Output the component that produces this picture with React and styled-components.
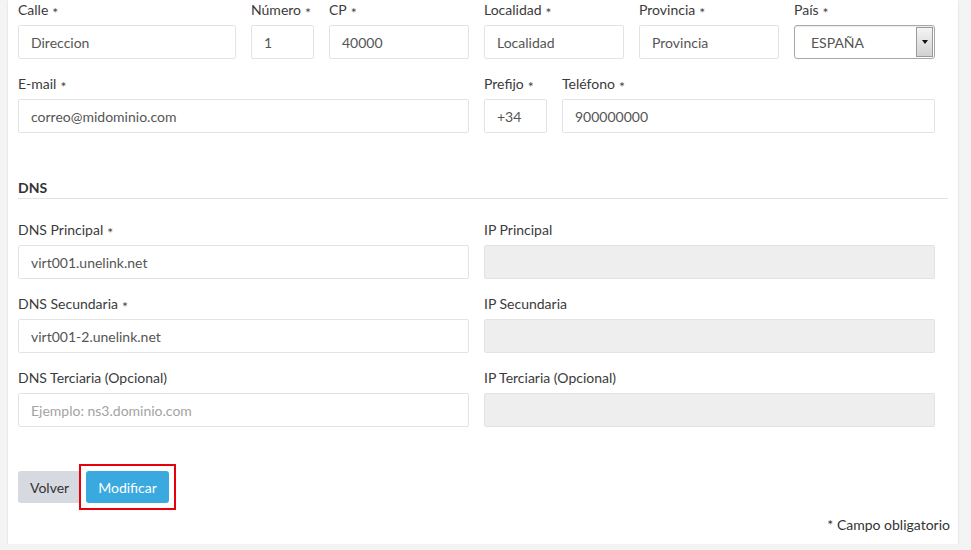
import React from "react"
import styled, { createGlobalStyle } from "styled-components"

const GlobalStyle = createGlobalStyle`
  html, body {
    margin: 0;
    padding: 0;
    background: #f4f4f4;
    font-family: Lato, "Open Sans", "Liberation Sans", sans-serif;
    font-size: 14px;
    color: #333;
  }
  * { box-sizing: border-box; }
`

const Card = styled.div`
  margin-left: 8px;
  width: 950px;
  background: #fff;
  padding: 0 10px 9px 10px;
  box-shadow: 0 1px 2px rgba(0, 0, 0, 0.12);
`

const FormGrid = styled.div`
  width: 917px;
`

const Row = styled.div`
  display: flex;
  gap: 15px;
`

const Field = styled.div`
  width: ${props => props.w}px;
  flex: none;
  margin-bottom: 15px;
`

const Label = styled.label`
  display: block;
  height: 20px;
  line-height: 20px;
  margin-bottom: 5px;
  color: #3b3b3b;
  white-space: nowrap;
`

const Req = styled.span`
  margin-left: 4px;
  font-size: 14px;
  color: #444;
  vertical-align: -3px;
`

const Input = styled.input`
  display: block;
  width: 100%;
  height: 34px;
  padding: 0 12px;
  border: 1px solid #e3e3e3;
  border-radius: 2px;
  font-family: inherit;
  font-size: 14px;
  color: #555;
  background: ${props => (props.disabled ? "#eeeeee" : "#fff")};
  outline: none;
  &::placeholder {
    color: #a3a3a3;
  }
`

const Select = styled.div`
  display: flex;
  align-items: center;
  height: 34px;
  border: 1px solid #a8a8a8;
  border-radius: 3px;
  padding-left: 16px;
  color: #555;
  box-shadow: inset 0 1px 1px rgba(0, 0, 0, 0.08);
  overflow: hidden;
`

const SelectText = styled.span`
  flex: 1;
`

const SelectArrow = styled.span`
  width: 17px;
  align-self: stretch;
  margin: 1px 1px 1px 0;
  border: 1px solid #9a9a9a;
  background: linear-gradient(#f4f4f4, #d2d2d2);
  display: flex;
  align-items: center;
  justify-content: center;
  &::after {
    content: "";
    border-left: 3.5px solid transparent;
    border-right: 3.5px solid transparent;
    border-top: 4px solid #111;
  }
`

const SectionTitle = styled.h4`
  margin: 30px 0 21px 0;
  height: 21px;
  line-height: 20px;
  font-size: 14px;
  font-weight: 700;
  color: #333;
  border-bottom: 1px solid #e3e3e3;
`

const Actions = styled.div`
  display: flex;
  gap: 5px;
  margin-top: 29px;
`

const Button = styled.button`
  height: 32px;
  padding: 0 12px;
  border: none;
  border-radius: 3px;
  font-family: inherit;
  font-size: 14px;
  background: ${props => (props.primary ? "#39a9e0" : "#d6d9e0")};
  color: ${props => (props.primary ? "#fff" : "#333")};
`

const Highlight = styled.span`
  position: relative;
  display: inline-flex;
  &::after {
    content: "";
    position: absolute;
    left: -7px;
    right: -7px;
    top: -7px;
    bottom: -7px;
    border: 2px solid #e8000b;
    pointer-events: none;
  }
`

const Note = styled.p`
  margin: 12px -2px 0 0;
  line-height: 20px;
  text-align: right;
  color: #333;
`

const F = ({ w, label, req, children }) => (
  <Field w={w}>
    <Label>
      {label}
      {req && <Req>*</Req>}
    </Label>
    {children}
  </Field>
)

export default function App() {
  return (
    <>
      <GlobalStyle />
      <Card>
        <FormGrid>
          <Row>
            <F w={218} label="Calle" req>
              <Input defaultValue="Direccion" />
            </F>
            <F w={63} label="Número" req>
              <Input defaultValue="1" />
            </F>
            <F w={140} label="CP" req>
              <Input defaultValue="40000" />
            </F>
            <F w={140} label="Localidad" req>
              <Input defaultValue="Localidad" />
            </F>
            <F w={140} label="Provincia" req>
              <Input defaultValue="Provincia" />
            </F>
            <F w={141} label="País" req>
              <Select>
                <SelectText>ESPAÑA</SelectText>
                <SelectArrow />
              </Select>
            </F>
          </Row>
          <Row>
            <F w={451} label="E-mail" req>
              <Input defaultValue="correo@midominio.com" />
            </F>
            <F w={63} label="Prefijo" req>
              <Input defaultValue="+34" />
            </F>
            <F w={373} label="Teléfono" req>
              <Input defaultValue="900000000" />
            </F>
          </Row>
        </FormGrid>

        <SectionTitle>DNS</SectionTitle>

        <FormGrid>
          <Row>
            <F w={451} label="DNS Principal" req>
              <Input defaultValue="virt001.unelink.net" />
            </F>
            <F w={451} label="IP Principal">
              <Input disabled />
            </F>
          </Row>
          <Row>
            <F w={451} label="DNS Secundaria" req>
              <Input defaultValue="virt001-2.unelink.net" />
            </F>
            <F w={451} label="IP Secundaria">
              <Input disabled />
            </F>
          </Row>
          <Row>
            <F w={451} label="DNS Terciaria (Opcional)">
              <Input placeholder="Ejemplo: ns3.dominio.com" />
            </F>
            <F w={451} label="IP Terciaria (Opcional)">
              <Input disabled />
            </F>
          </Row>
        </FormGrid>

        <Actions>
          <Button>Volver</Button>
          <Highlight>
            <Button primary>Modificar</Button>
          </Highlight>
        </Actions>

        <Note>* Campo obligatorio</Note>
      </Card>
    </>
  )
}
